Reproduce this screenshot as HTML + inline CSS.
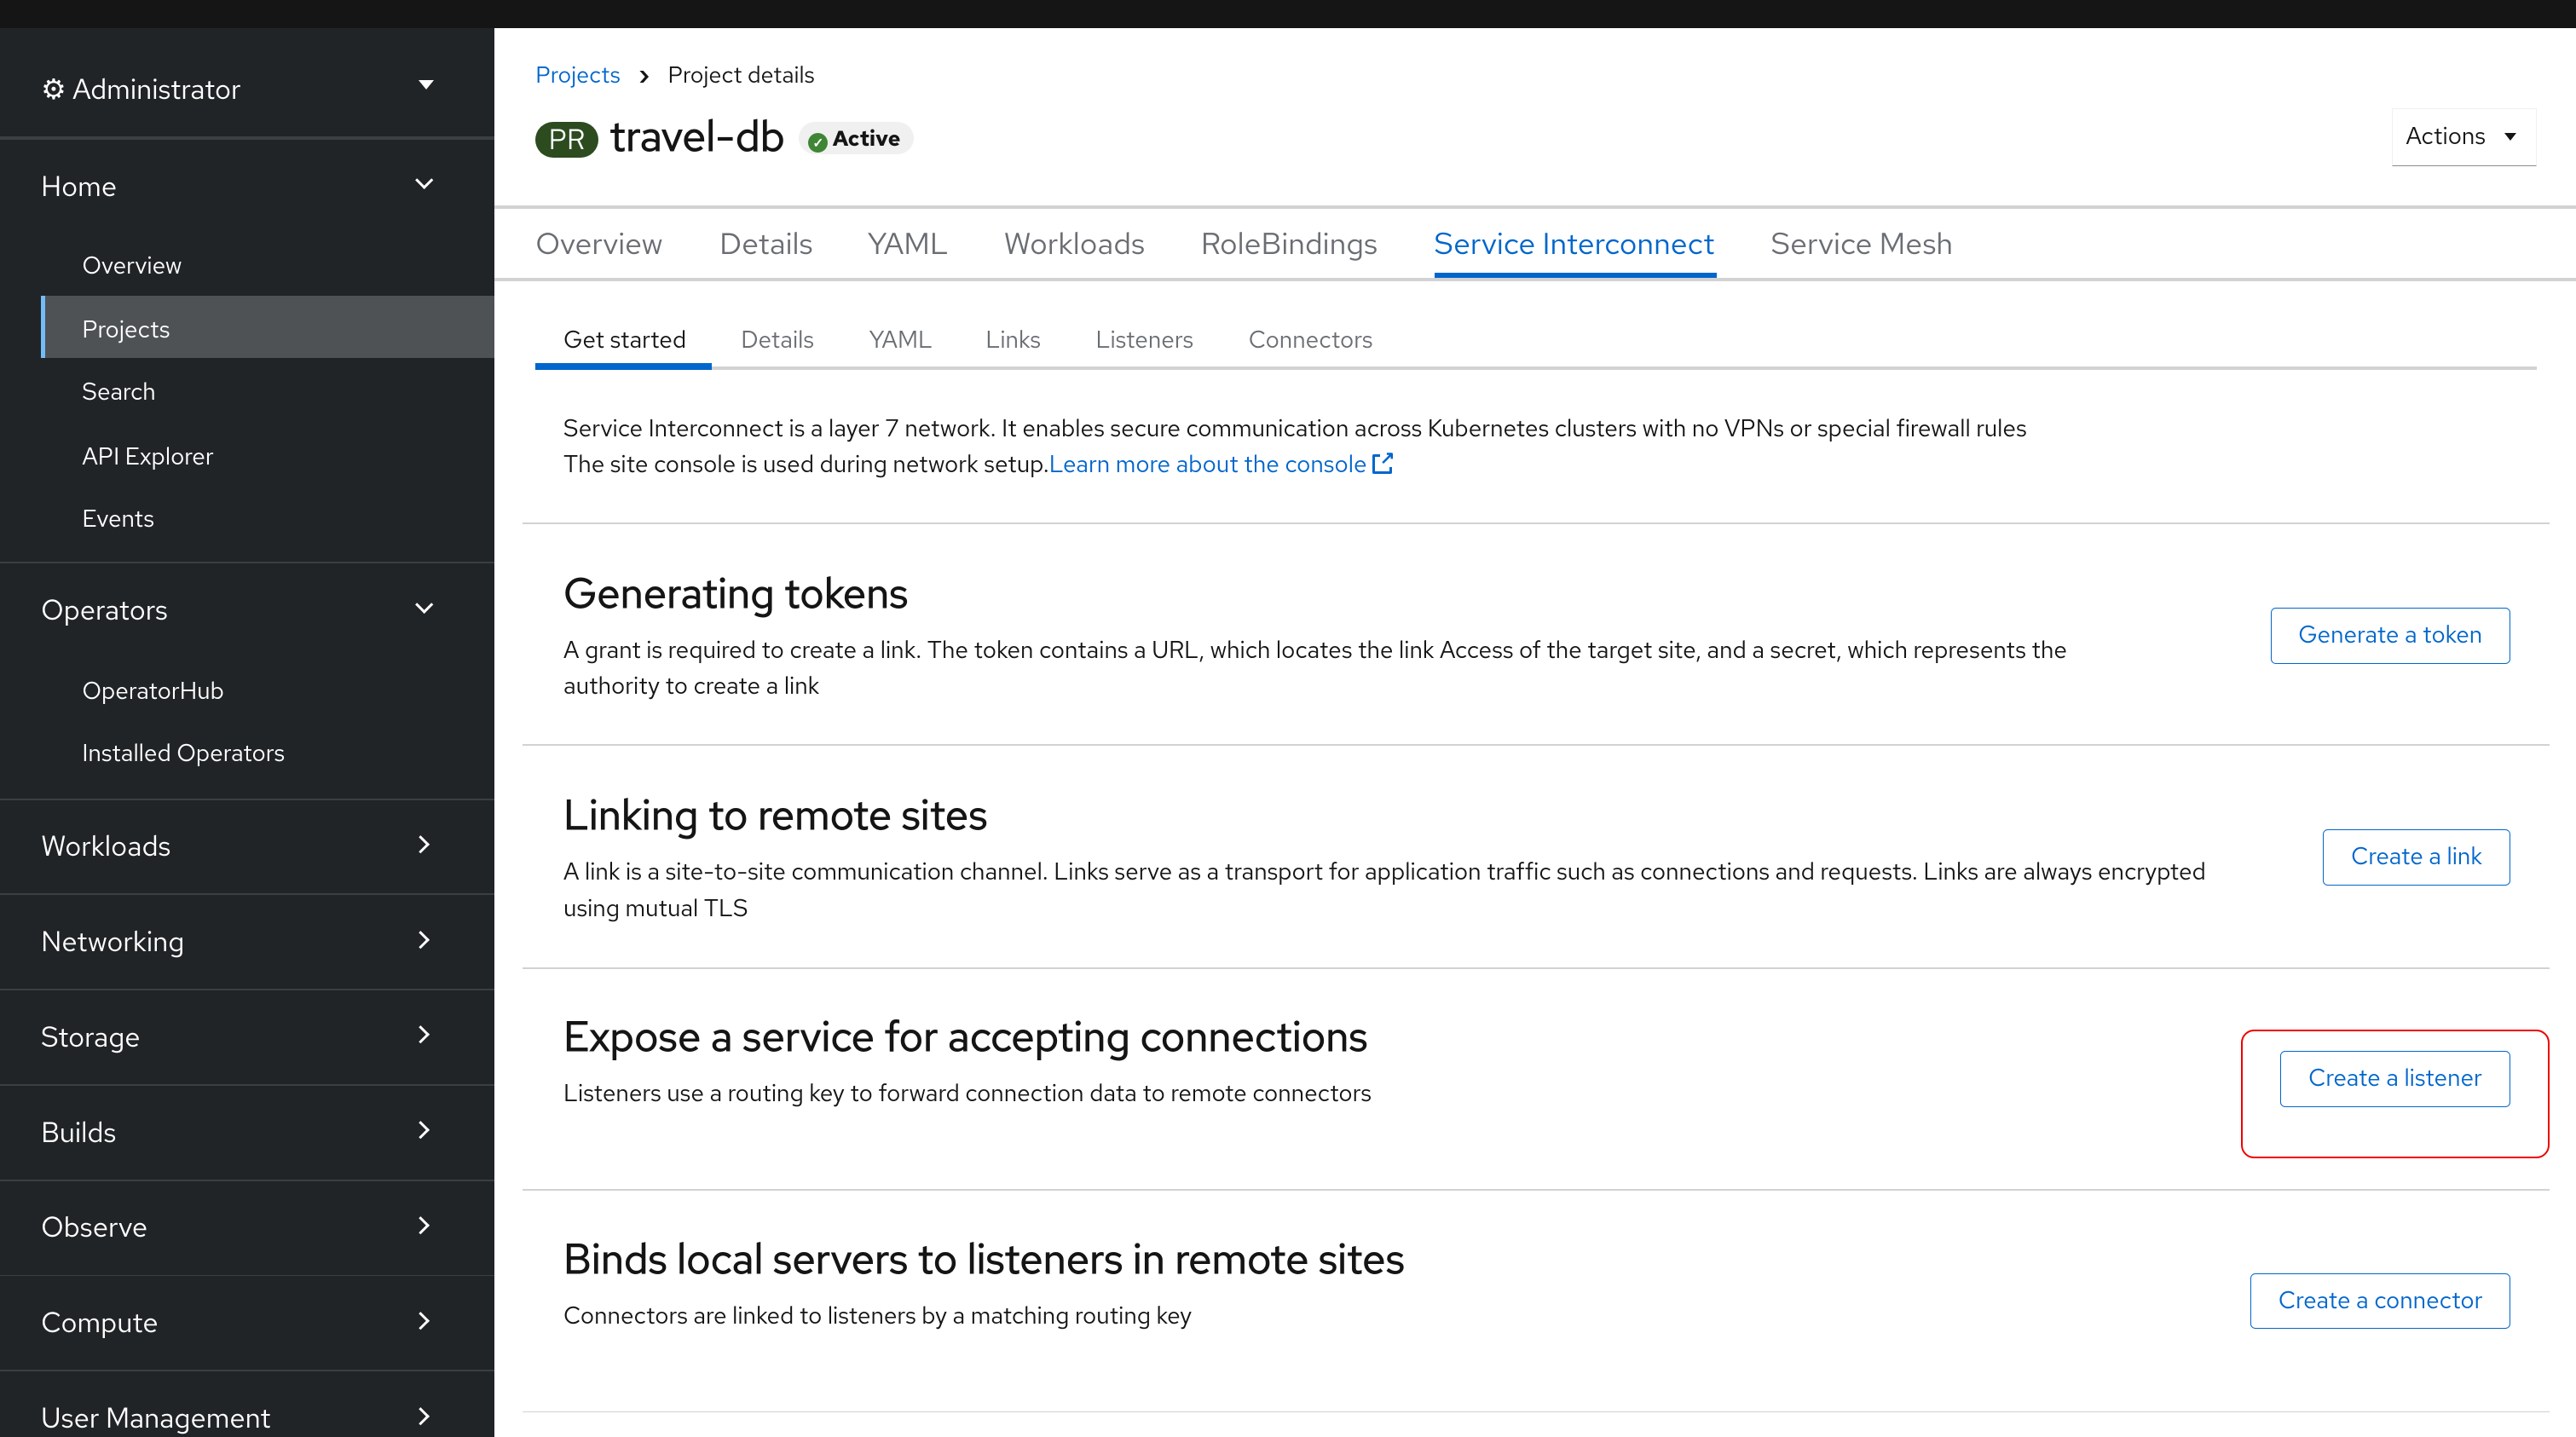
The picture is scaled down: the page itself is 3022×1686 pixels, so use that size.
<!DOCTYPE html>
<html><head><meta charset="utf-8"><style>
*{box-sizing:border-box;margin:0;padding:0}
html,body{width:3022px;height:1686px;overflow:hidden;background:#fff}
#w{zoom:1.92730;width:1568px;height:875px;position:relative;font-family:"Red Hat Text","Liberation Sans",sans-serif;color:#151515}
.top{position:absolute;left:0;top:0;width:1568px;height:17px;background:#151515}
.side{position:absolute;left:0;top:17px;width:301px;height:858px;background:#212427;color:#fff}
.a{position:absolute;white-space:nowrap}
.sep{position:absolute;left:0;width:301px;height:1px;background:#3c3f42}
.nav{font-size:17px}
.sub{font-size:14.5px}
.chev{position:absolute;left:254px;width:8px;height:8px;border-right:2px solid #fff;border-bottom:2px solid #fff}
.main{position:absolute;left:301px;top:17px;right:0;bottom:0}
.hl{position:absolute;height:1px;background:#d2d2d2}
.t1{font-size:18.5px;color:#6a6e73}
.t2{font-size:14.5px;color:#6a6e73}
p{font-size:14.5px;line-height:22px}
p.w{white-space:normal}
h2{font-size:25.5px;font-weight:400;position:absolute;white-space:nowrap;-webkit-text-stroke:.5px #151515}
.btn{position:absolute;border:1px solid #06c;border-radius:3px;color:#06c;font-size:14.5px;text-align:center;line-height:32px;height:34px}
</style></head><body><div id="w">
<div class="top"></div>
<div class="side">
 <div class="a nav" style="left:25px;top:26px">⚙ Administrator</div>
 <div class="a" style="left:255px;top:32px;width:0;height:0;border-left:5px solid transparent;border-right:5px solid transparent;border-top:6px solid #fff"></div>
 <div class="sep" style="top:66px;height:2px"></div>
 <div class="a nav" style="left:25px;top:85px">Home</div><div class="chev" style="top:89px;transform:rotate(45deg)"></div>
 <div class="a sub" style="left:50px;top:135px">Overview</div>
 <div class="a" style="left:25px;top:163px;width:276px;height:38px;background:#4f5255;border-left:3px solid #73bcf7"></div>
 <div class="a sub" style="left:50px;top:174px">Projects</div>
 <div class="a sub" style="left:50px;top:212px">Search</div>
 <div class="a sub" style="left:50px;top:251px">API Explorer</div>
 <div class="a sub" style="left:50px;top:289px">Events</div>
 <div class="sep" style="top:325px"></div>
 <div class="a nav" style="left:25px;top:343px">Operators</div><div class="chev" style="top:347px;transform:rotate(45deg)"></div>
 <div class="a sub" style="left:50px;top:394px">OperatorHub</div>
 <div class="a sub" style="left:50px;top:432px">Installed Operators</div>
 <div class="sep" style="top:469px"></div>
 <div class="a nav" style="left:25px;top:487px">Workloads</div><div class="chev" style="top:493px;left:252px;transform:rotate(-45deg)"></div>
 <div class="sep" style="top:527px"></div>
 <div class="a nav" style="left:25px;top:545px">Networking</div><div class="chev" style="top:551px;left:252px;transform:rotate(-45deg)"></div>
 <div class="sep" style="top:585px"></div>
 <div class="a nav" style="left:25px;top:603px">Storage</div><div class="chev" style="top:609px;left:252px;transform:rotate(-45deg)"></div>
 <div class="sep" style="top:643px"></div>
 <div class="a nav" style="left:25px;top:661px">Builds</div><div class="chev" style="top:667px;left:252px;transform:rotate(-45deg)"></div>
 <div class="sep" style="top:701px"></div>
 <div class="a nav" style="left:25px;top:719px">Observe</div><div class="chev" style="top:725px;left:252px;transform:rotate(-45deg)"></div>
 <div class="sep" style="top:759px"></div>
 <div class="a nav" style="left:25px;top:777px">Compute</div><div class="chev" style="top:783px;left:252px;transform:rotate(-45deg)"></div>
 <div class="sep" style="top:817px"></div>
 <div class="a nav" style="left:25px;top:835px">User Management</div><div class="chev" style="top:841px;left:252px;transform:rotate(-45deg)"></div>
</div>
<div class="main">
 <div class="a" style="left:25px;top:20px;font-size:14px"><span style="color:#06c">Projects</span> <span style="margin:0 8px;font-weight:700">›</span> Project details</div>
 <div class="a" style="left:25px;top:57px;width:38px;height:22px;border-radius:11px;background:#2c4b1f;color:#fff;font-size:17px;text-align:center;line-height:22px">PR</div>
 <div class="a" style="left:70px;top:49px;font-size:26px;-webkit-text-stroke:.5px #151515">travel-db</div>
 <div class="a" style="left:185px;top:57px;height:20px;padding:0 8px 0 6px;border-radius:10px;background:#f0f0f0;font-size:13px;line-height:20px;font-weight:700"><span style="display:inline-block;width:12px;height:12px;border-radius:50%;background:#3e8635;color:#fff;font-size:8px;line-height:12px;text-align:center;vertical-align:-1px">✓</span> Active</div>
 <div class="a" style="left:1155px;top:49px;width:88px;height:35px;border:1px solid #f0f0f0;border-bottom:1px solid #8a8d90;font-size:14.5px;line-height:33px;padding-left:8px">Actions <span style="display:inline-block;margin-left:8px;border-left:4px solid transparent;border-right:4px solid transparent;border-top:5px solid #151515;vertical-align:2px"></span></div>
 <div class="hl" style="left:0;right:0;top:108px;height:2px"></div>
 <div class="a t1" style="left:25px;top:119px">Overview</div>
 <div class="a t1" style="left:137px;top:119px">Details</div>
 <div class="a t1" style="left:227px;top:119px">YAML</div>
 <div class="a t1" style="left:310px;top:119px">Workloads</div>
 <div class="a t1" style="left:430px;top:119px">RoleBindings</div>
 <div class="a t1" style="left:572px;top:119px;color:#06c">Service Interconnect</div>
 <div class="a t1" style="left:777px;top:119px">Service Mesh</div>
 <div class="hl" style="left:0;right:0;top:152px;height:2px"></div>
 <div class="a" style="left:572px;top:149px;width:172px;height:3px;background:#06c"></div>
 <div class="a t2" style="left:42px;top:180px;color:#151515">Get started</div>
 <div class="a t2" style="left:150px;top:180px">Details</div>
 <div class="a t2" style="left:228px;top:180px">YAML</div>
 <div class="a t2" style="left:299px;top:180px">Links</div>
 <div class="a t2" style="left:366px;top:180px">Listeners</div>
 <div class="a t2" style="left:459px;top:180px">Connectors</div>
 <div class="hl" style="left:25px;width:1218px;top:206px;height:2px"></div>
 <div class="a" style="left:25px;top:204px;width:107px;height:4px;background:#06c"></div>
 <p class="a" style="left:42px;top:233px">Service Interconnect is a layer 7 network. It enables secure communication across Kubernetes clusters with no VPNs or special firewall rules<br>The site console is used during network setup.<span style="color:#06c">Learn more about the console <span style="display:inline-block;width:12px;height:12px;border:2px solid #06c;border-radius:1px;vertical-align:-1px;position:relative"><span style="position:absolute;left:3px;top:-4px;font-size:11px;font-weight:700;background:#fff;line-height:10px">↗</span></span></span></p>
 <div class="hl" style="left:17px;width:1234px;top:301px"></div>
 <h2 style="left:42px;top:327px">Generating tokens</h2>
 <p class="a w" style="left:42px;top:368px;width:940px">A grant is required to create a link. The token contains a URL, which locates the link Access of the target site, and a secret, which represents the authority to create a link</p>
 <div class="btn" style="left:1081px;top:353px;width:146px">Generate a token</div>
 <div class="hl" style="left:17px;width:1234px;top:436px"></div>
 <h2 style="left:42px;top:462px">Linking to remote sites</h2>
 <p class="a w" style="left:42px;top:503px;width:1020px">A link is a site-to-site communication channel. Links serve as a transport for application traffic such as connections and requests. Links are always encrypted using mutual TLS</p>
 <div class="btn" style="left:1113px;top:488px;width:114px">Create a link</div>
 <div class="hl" style="left:17px;width:1234px;top:572px"></div>
 <h2 style="left:42px;top:597px">Expose a service for accepting connections</h2>
 <p class="a" style="left:42px;top:638px">Listeners use a routing key to forward connection data to remote connectors</p>
 <div class="a" style="left:1063px;top:610px;width:188px;height:78px;border:1.5px solid #e00;border-radius:8px"></div>
 <div class="btn" style="left:1087px;top:623px;width:140px">Create a listener</div>
 <div class="hl" style="left:17px;width:1234px;top:707px"></div>
 <h2 style="left:42px;top:732px">Binds local servers to listeners in remote sites</h2>
 <p class="a" style="left:42px;top:773px">Connectors are linked to listeners by a matching routing key</p>
 <div class="btn" style="left:1069px;top:758px;width:158px">Create a connector</div>
 <div class="hl" style="left:17px;width:1234px;top:842px"></div>
</div>
</div></body></html>
